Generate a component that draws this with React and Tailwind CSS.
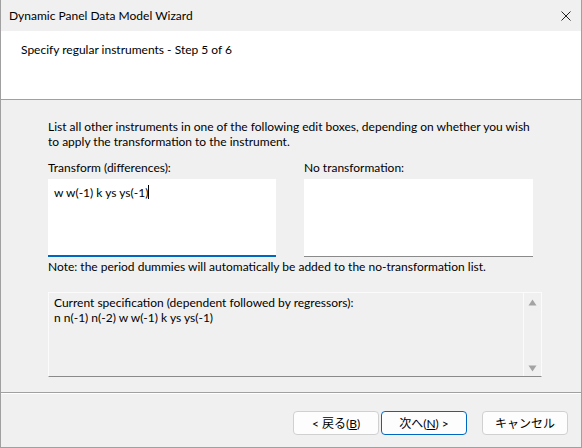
import React from 'react';

const ui = { fontFamily: 'Lato, "Noto Sans CJK JP", sans-serif' };

const WizardButton = ({ children, primary }) => (
  <button
    className={
      primary
        ? 'h-[24px] w-[86px] rounded-[4px] border border-[#0067c0] bg-[#fdfdfd] text-[12px] text-black'
        : 'h-[24px] w-[86px] rounded-[4px] border border-[#d0d0d0] bg-[#fdfdfd] text-[12px] text-black'
    }
    style={ui}
  >
    {children}
  </button>
);

export default function App() {
  return (
    <div
      className="flex h-[448px] w-[582px] flex-col border-x border-b border-[#a0a0a0] bg-[#f0f0f0] text-[12px] leading-[15px] text-black"
      style={ui}
    >
      {/* title bar */}
      <div className="flex h-[31px] items-center justify-between bg-[#f0f0f0] pl-[8px] pr-[9px]">
        <span>Dynamic Panel Data Model Wizard</span>
        <svg width="10" height="10" viewBox="0 0 10 10" className="mr-[1px]">
          <path d="M0.5 0.5 L9.5 9.5 M9.5 0.5 L0.5 9.5" stroke="#222" strokeWidth="1" />
        </svg>
      </div>

      {/* step header */}
      <div className="h-[69px] border-b border-[#a0a0a0] bg-white pl-[20px] pt-[11px]">
        Specify regular instruments - Step 5 of 6
      </div>

      {/* page body */}
      <div className="flex h-[293px] flex-col border-b border-[#a0a0a0] pl-[47px] pt-[19px]">
        <p>
          List all other instruments in one of the following edit boxes, depending on whether you wish
          <br />
          to apply the transformation to the instrument.
        </p>

        <div className="mt-[11px] flex gap-[28px]">
          <div className="flex w-[228px] flex-col">
            <span>Transform (differences):</span>
            <div className="mt-[4px] h-[78px] border-b-2 border-[#0067c0] bg-white px-[6px] pt-[4px]">
              <span>w w(-1) k ys ys(-1)</span>
              <span className="inline-block h-[14px] w-px translate-y-[2px] bg-black" />
            </div>
          </div>
          <div className="flex w-[229px] flex-col">
            <span>No transformation:</span>
            <div className="mt-[4px] h-[78px] border-b border-[#8a8a8a] bg-white" />
          </div>
        </div>

        <p className="mt-[2px]">
          Note: the period dummies will automatically be added to the no-transformation list.
        </p>

        <div className="mt-[18px] flex h-[85px] w-[494px] border border-b-[#8a8a8a] border-x-[#fbfbfb] border-t-[#fbfbfb] bg-[#f0f0f0]">
          <div className="flex-1 pl-[5px] pt-[2px]">
            <p>Current specification (dependent followed by regressors):</p>
            <p>n n(-1) n(-2) w w(-1) k ys ys(-1)</p>
          </div>
          <div className="flex w-[18px] flex-col items-center justify-between border-l border-[#fbfbfb] pb-[4px] pt-[6px]">
            <svg width="9" height="7" viewBox="0 0 9 7">
              <path d="M4.5 0.5 L8.5 6.5 L0.5 6.5 Z" fill="#a3a3a3" />
            </svg>
            <svg width="9" height="7" viewBox="0 0 9 7">
              <path d="M0.5 0.5 L8.5 0.5 L4.5 6.5 Z" fill="#a3a3a3" />
            </svg>
          </div>
        </div>
      </div>

      {/* button row */}
      <div className="flex flex-1 items-start border-t border-white pr-[13px] pt-[17px]">
        <div className="ml-auto flex">
          <WizardButton>
            &lt; 戻る(<span className="underline">B</span>)
          </WizardButton>
          <div className="ml-[2px]">
            <WizardButton primary>
              次へ(<span className="underline">N</span>) &gt;
            </WizardButton>
          </div>
          <div className="ml-[15px]">
            <WizardButton>キャンセル</WizardButton>
          </div>
        </div>
      </div>
    </div>
  );
}
